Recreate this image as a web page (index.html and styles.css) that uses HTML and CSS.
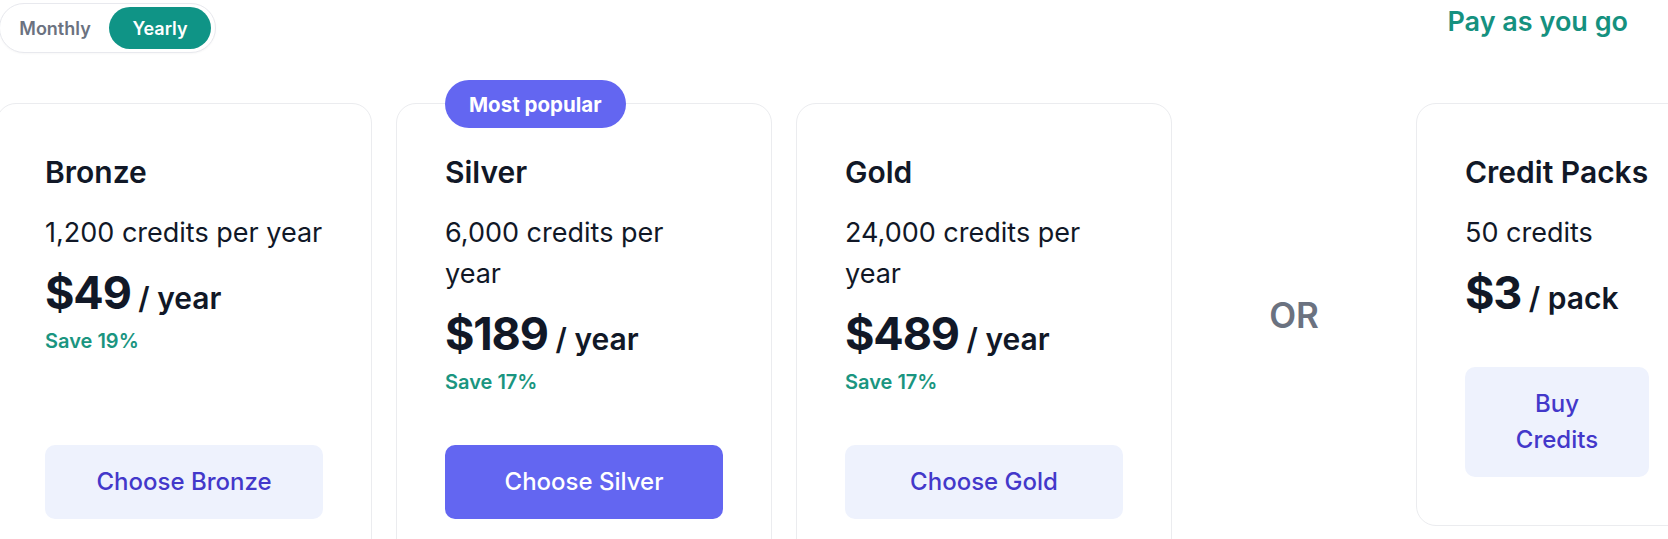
FILE: index.html
```html
<!DOCTYPE html>
<html lang="en">
<head>
    <meta charset="UTF-8">
    <meta name="viewport" content="width=device-width, initial-scale=1.0">
    <title>Pricing</title>
    <link rel="stylesheet" href="styles.css">
</head>
<body>
    <div class="page">
        <div class="top-row">
            <div class="billing-toggle">
                <button class="toggle-btn">Monthly</button>
                <button class="toggle-btn active">Yearly</button>
            </div>
            <h2 class="payg-title">Pay as you go</h2>
        </div>

        <div class="pricing">
            <div class="plans">
                <div class="card">
                    <div class="card-body">
                        <h3 class="plan-name">Bronze</h3>
                        <p class="plan-credits">1,200 credits per year</p>
                        <p class="plan-price"><span class="amount">$49</span> / year</p>
                        <p class="plan-save">Save 19%</p>
                    </div>
                    <button class="plan-btn">Choose Bronze</button>
                </div>

                <div class="card">
                    <span class="badge">Most popular</span>
                    <div class="card-body">
                        <h3 class="plan-name">Silver</h3>
                        <p class="plan-credits">6,000 credits per year</p>
                        <p class="plan-price"><span class="amount">$189</span> / year</p>
                        <p class="plan-save">Save 17%</p>
                    </div>
                    <button class="plan-btn primary">Choose Silver</button>
                </div>

                <div class="card">
                    <div class="card-body">
                        <h3 class="plan-name">Gold</h3>
                        <p class="plan-credits">24,000 credits per year</p>
                        <p class="plan-price"><span class="amount">$489</span> / year</p>
                        <p class="plan-save">Save 17%</p>
                    </div>
                    <button class="plan-btn">Choose Gold</button>
                </div>
            </div>

            <div class="side">
                <div class="or">OR</div>
                <div class="card credit-card">
                    <div class="card-body">
                        <h3 class="plan-name">Credit Packs</h3>
                        <p class="plan-credits">50 credits</p>
                        <p class="plan-price"><span class="amount">$3</span> / pack</p>
                    </div>
                    <button class="plan-btn">Buy Credits</button>
                </div>
            </div>
        </div>
    </div>
</body>
</html>
```

FILE: styles.css
```css
* {
    box-sizing: border-box;
    margin: 0;
    padding: 0;
    font-family: 'Inter', 'Liberation Sans', Arial, sans-serif;
}

html, body {
    overflow: hidden;
    background-color: #fff;
    color: #111827;
}

.page {
    width: 1668px;
    padding-top: 3px;
}

/* top row */
.top-row {
    display: flex;
    align-items: flex-start;
}

.billing-toggle {
    display: flex;
    gap: 3px;
    margin-left: -1px;
    padding: 3px 4px;
    background-color: #fff;
    border: 1px solid #e8e9ee;
    border-radius: 999px;
    box-shadow: 0 1px 2px rgba(0,0,0,0.03);
}

.toggle-btn {
    width: 102px;
    height: 42px;
    border: none;
    border-radius: 999px;
    background: none;
    color: #6b7280;
    font-size: 18px;
    font-weight: 600;
    cursor: pointer;
}

.toggle-btn.active {
    background-color: #0f9486;
    color: #fff;
}

.payg-title {
    margin-left: auto;
    margin-right: 40px;
    margin-top: 1px;
    font-size: 27px;
    line-height: 36px;
    font-weight: 600;
    color: #15917f;
}

/* cards */
.pricing {
    display: flex;
    align-items: flex-start;
    margin-top: 50px;
    margin-left: -4px;
}

.plans {
    display: flex;
    gap: 24px;
}

.card {
    position: relative;
    display: flex;
    flex-direction: column;
    width: 376px;
    padding: 48px;
    background-color: #fff;
    border: 1px solid #ebecef;
    border-radius: 20px;
}

.card-body {
    flex: 1;
    padding-bottom: 49px;
}

.badge {
    position: absolute;
    top: -24px;
    left: 48px;
    height: 48px;
    padding: 0 24px;
    display: flex;
    align-items: center;
    background-color: #6366f1;
    color: #fff;
    border-radius: 999px;
    font-size: 20.5px;
    font-weight: 700;
    white-space: nowrap;
}

.plan-name {
    font-size: 30px;
    line-height: 40px;
    font-weight: 600;
}

.plan-credits {
    margin-top: 20px;
    font-size: 27px;
    line-height: 41px;
}

.plan-price {
    margin-top: 15px;
    font-size: 30px;
    line-height: 50px;
    font-weight: 600;
}

.plan-price .amount {
    font-size: 45px;
    font-weight: 700;
    letter-spacing: -0.025em;
}

.plan-save {
    margin-top: 4px;
    font-size: 20px;
    line-height: 28px;
    font-weight: 600;
    color: #1a9580;
}

.plan-btn {
    width: 100%;
    padding: 19px 30px;
    border: none;
    border-radius: 10px;
    background-color: #eef2fd;
    color: #4338ca;
    font-size: 24px;
    line-height: 36px;
    font-weight: 500;
    cursor: pointer;
}

.plan-btn.primary {
    background-color: #6366f1;
    color: #fff;
}

/* pay as you go side */
.side {
    display: flex;
    align-items: center;
}

.or {
    width: 244px;
    text-align: center;
    font-size: 35px;
    font-weight: 600;
    color: #6b7280;
}

.credit-card {
    width: 282px;
    flex-shrink: 0;
}

.credit-card .card-body {
    padding-bottom: 44px;
}
```
